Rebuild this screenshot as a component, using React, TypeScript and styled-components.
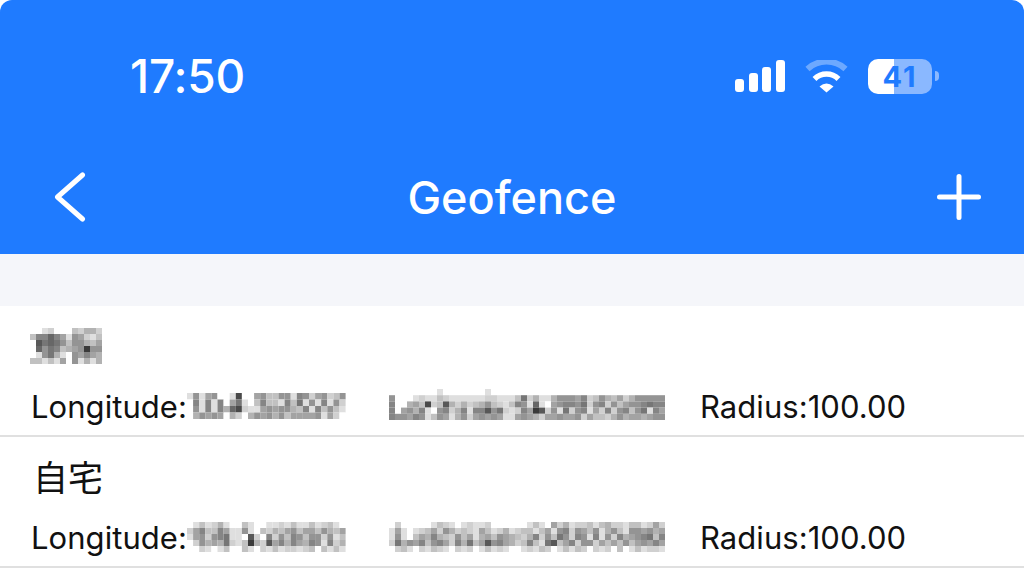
import React from 'react'
import styled, { createGlobalStyle } from 'styled-components'

const GlobalStyle = createGlobalStyle`
	html, body {
		margin: 0;
		padding: 0;
		background: #fff;
		overflow: hidden;
	}
`

const Page = styled.div`
	width: 1024px;
	height: 578px;
	background: #fff;
	font-family: Inter, "Noto Sans CJK JP", sans-serif;
	overflow: hidden;
`

const Header = styled.header`
	background: #1f7bff;
	border-radius: 12px 12px 0 0;
	color: #fff;
`

const StatusBar = styled.div`
	height: 152px;
	padding: 0 85px 0 130px;
	display: flex;
	align-items: center;
	justify-content: space-between;
`

const Time = styled.div`
	font-size: 46px;
	font-weight: 500;
	letter-spacing: -0.2px;
`

const StatusIcons = styled.div`
	display: flex;
	align-items: center;
	gap: 20px;
`

const SignalBars = styled.div`
	width: 50px;
	height: 32px;
	display: flex;
	align-items: flex-end;
	justify-content: space-between;
`

const SignalBar = styled.span<{ $height: number }>`
	width: 9px;
	height: ${p => p.$height}px;
	background: #fff;
	border-radius: 3px;
`

const WifiSvg = styled.svg`
	display: block;
	fill: none;
`

const Battery = styled.div<{ $level: number }>`
	position: relative;
	width: 64px;
	height: 35px;
	margin-right: 7px;
	border-radius: 10px;
	background: linear-gradient(90deg, #fff ${p => p.$level}%, #8ab8ff ${p => p.$level}%);
	color: #1f7bff;
	font-size: 29px;
	font-weight: 700;
	letter-spacing: 2px;
	line-height: 35px;
	text-align: center;

	&::after {
		content: '';
		position: absolute;
		top: 12px;
		right: -7px;
		width: 4px;
		height: 10px;
		border-radius: 0 5px 5px 0;
		background: #8ab8ff;
	}
`

const NavBar = styled.nav`
	height: 90px;
	padding: 0 43px 12px;
	display: grid;
	grid-template-columns: 1fr auto 1fr;
	align-items: center;
`

const NavTitle = styled.h1`
	margin: 0;
	font-size: 45px;
	font-weight: 500;
	line-height: 1;
`

const NavIcon = styled.svg<{ $end?: boolean }>`
	display: block;
	justify-self: ${p => (p.$end ? 'end' : 'start')};
	fill: none;
	stroke: #fff;
`

const Gap = styled.div`
	height: 52px;
	background: #f5f6fa;
`

const Row = styled.section`
	padding: 0 31px 8px;
	border-bottom: 2px solid #e0e0e0;
`

const RowTitle = styled.div`
	height: 79px;
	display: flex;
	align-items: center;
	font-size: 35px;
	color: #111;
`

const PlaceName = styled.span`
	padding: 0 0 3px 2px;
`

const RowInfo = styled.div`
	height: 42px;
	display: grid;
	grid-template-columns: 358px 311px auto;
	align-items: center;
	font-size: 31px;
	letter-spacing: 0.05px;
	color: #111;
`

const InfoCell = styled.div`
	display: flex;
	align-items: center;
	white-space: nowrap;
`

const MosaicSvg = styled.svg<{ $shift?: number; $lift?: number }>`
	display: block;
	flex-shrink: 0;
	margin-left: ${p => p.$shift ?? 0}px;
	margin-top: ${p => -(p.$lift ?? 0)}px;
	filter: blur(0.4px);
`

type MosaicProps = {
	rows: string[]
	cellWidth?: number
	cellHeight?: number
	shift?: number
	lift?: number
}

// pixelated text from the screenshot, each digit is how dark one block is
const Mosaic = ({ rows, cellWidth = 6, cellHeight = 6, shift, lift }: MosaicProps) => {
	const cols = Math.max(...rows.map(r => r.length))
	return (
		<MosaicSvg $shift={shift} $lift={lift} width={cols * cellWidth} height={rows.length * cellHeight}>
			{rows.map((row, y) =>
				row.split('').map((c, x) => {
					const dark = parseInt(c, 16)
					const level = dark === 0 ? 255 : 238 - dark * 15
					return (
						<rect
							key={`${x}-${y}`}
							x={x * cellWidth}
							y={y * cellHeight}
							width={cellWidth}
							height={cellHeight}
							fill={`rgb(${level},${level},${level})`}
						/>
					)
				})
			)}
		</MosaicSvg>
	)
}

const SIGNAL = [13, 19, 25, 32]

const WifiIcon = () => (
	<WifiSvg width="43" height="33" viewBox="0 0 43 33">
		<path d="M2.5 9 A28 28 0 0 1 40.5 9" stroke="#fff" strokeOpacity="0.35" strokeWidth="6" />
		<path d="M9.5 19 A17 17 0 0 1 33.5 19" stroke="#fff" strokeWidth="5.5" />
		<path d="M14.5 26.5 Q21.5 20.5 28.5 26.5 L21.5 32.5 Z" fill="#fff" />
	</WifiSvg>
)

const titleMosaic = [
	'0012000324420',
	'3779751652130',
	'0a89863664350',
	'096873456c660',
	'0168410657540',
	'3313150614140',
]

const longitudeA = [
	'16156001b00563366176256236',
	'07171705810373317381617162',
	'06171749b21156566437173631',
	'04656504204656463555561520',
]

const latitudeA = [
	'00000000100000001',
	'6000121132111111221113824114666572364352466666',
	'700453b23a424234632137619105677682672635667877',
	'7056471067247177a6821275ca26182671527267368175',
	'7665761365146256565115654255655625332464554566',
]

const longitudeB = [
	'01312410031001121311312310',
	'25733751161032435635536435',
	'15626781 0a207263763662613'.split(' ').join('1'),
	'02645482 3c42a574754761724'.split(' ').join('1'),
	'00210130031021312212303131',
]

const latitudeB = [
	'0200000132101211200000013105241223134221331252',
	'1510123526423215312412331351672653614631665645',
	'1610354743263514536543247263862761716274567837',
	'2846573675274835a67542373 8a357266253536356575'.split(' ').join('1'),
	'0231021321021201312100121320131320212030131221',
]

const App = () => {
	return (
		<Page>
			<GlobalStyle />
			<Header>
				<StatusBar>
					<Time>17:50</Time>
					<StatusIcons>
						<SignalBars>
							{SIGNAL.map(h => (
								<SignalBar key={h} $height={h} />
							))}
						</SignalBars>
						<WifiIcon />
						<Battery $level={41}>41</Battery>
					</StatusIcons>
				</StatusBar>
				<NavBar>
					<NavIcon width="44" height="50" viewBox="0 0 44 50">
						<path d="M39.5 3 L14.5 25 L39.5 47" strokeWidth="5" strokeLinecap="round" strokeLinejoin="round" />
					</NavIcon>
					<NavTitle>Geofence</NavTitle>
					<NavIcon $end width="44" height="46" viewBox="0 0 44 46">
						<path d="M2.5 23 H41.5 M22 2.5 V43.5" strokeWidth="5" strokeLinecap="round" />
					</NavIcon>
				</NavBar>
			</Header>
			<Gap />
			<Row>
				<RowTitle>
					<Mosaic rows={titleMosaic} shift={-1} />
				</RowTitle>
				<RowInfo>
					<InfoCell>
						Longitude:
						<Mosaic rows={longitudeA} cellWidth={6.1} cellHeight={6.5} />
					</InfoCell>
					<InfoCell>
						<Mosaic rows={latitudeA} cellHeight={6.2} lift={3} />
					</InfoCell>
					<InfoCell>Radius:100.00</InfoCell>
				</RowInfo>
			</Row>
			<Row>
				<RowTitle>
					<PlaceName>自宅</PlaceName>
				</RowTitle>
				<RowInfo>
					<InfoCell>
						Longitude:
						<Mosaic rows={longitudeB} cellWidth={6.1} />
					</InfoCell>
					<InfoCell>
						<Mosaic rows={latitudeB} />
					</InfoCell>
					<InfoCell>Radius:100.00</InfoCell>
				</RowInfo>
			</Row>
		</Page>
	)
}

export default App
